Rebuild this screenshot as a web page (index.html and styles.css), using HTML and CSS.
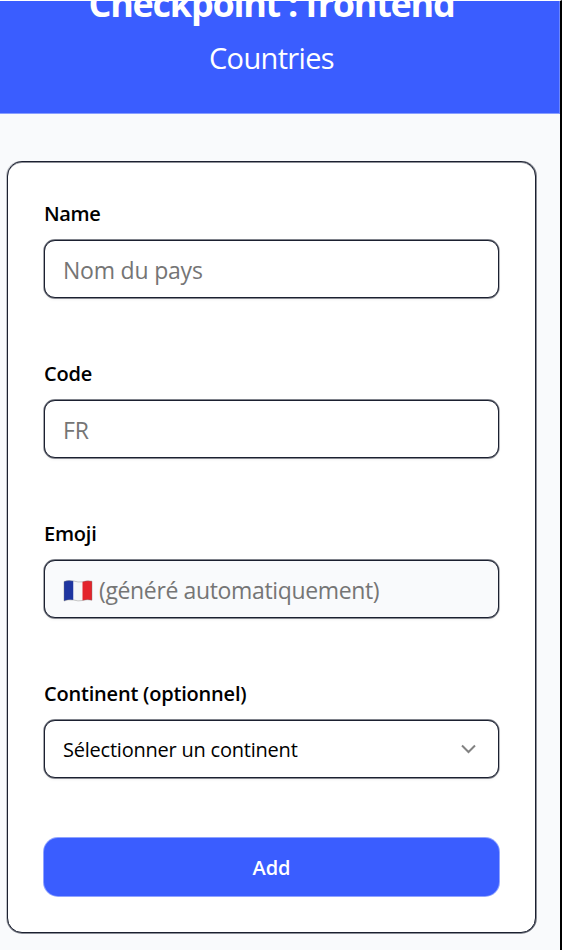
FILE: index.html
```html
<!DOCTYPE html>
<html lang="fr">
<head>
<meta charset="utf-8">
<title>Countries</title>
<link rel="stylesheet" href="styles.css">
</head>
<body>
<div class="page">
  <header class="header">
    <h1 class="title"><span>Checkpoint : frontend</span></h1>
    <p class="subtitle"><span>Countries</span></p>
  </header>
  <main class="main">
    <form class="card">
      <div class="field">
        <label class="label name">Name</label>
        <div class="control"><span class="hint">Nom du pays</span></div>
      </div>
      <div class="field">
        <label class="label">Code</label>
        <div class="control"><span class="hint">FR</span></div>
      </div>
      <div class="field">
        <label class="label">Emoji</label>
        <div class="control readonly">
          <svg class="flag" width="30" height="24" viewBox="0 0 30 24">
            <path fill="#1f35a0" d="M1 2.500Q5 .8 10.500 2V21Q5 20.200 1 22z"/>
            <path fill="#f7f7f7" d="M10.500 2Q15 3.500 19.500 2.800V21.500Q15 22.500 10.500 21z"/>
            <path fill="#e3242b" d="M19.500 2.800Q24 1.200 29 2.200V21.200Q24 20 19.500 21.500z"/>
            <path fill="none" stroke="#777" stroke-opacity=".5" stroke-width=".8" d="M1 2.500Q5 .8 10.500 2Q15 3.500 19.500 2.800Q24 1.200 29 2.200V21.200Q24 20 19.500 21.500Q15 22.500 10.500 21Q5 20.200 1 22z"/>
          </svg>
          <span class="hint auto">(généré automatiquement)</span>
        </div>
      </div>
      <div class="field">
        <label class="label">Continent (optionnel)</label>
        <div class="control select">
          <span class="choice">Sélectionner un continent</span>
          <svg class="chevron" width="16" height="10" viewBox="0 0 16 10"><path d="M2 1.500 8.500 8 15 1.500"/></svg>
        </div>
      </div>
      <button class="submit" type="button"><span>Add</span></button>
    </form>
  </main>
</div>
</body>
</html>
```
FILE: styles.css
```css
* { box-sizing: border-box; }
body {
  margin: 0;
  height: 950px;
  overflow: hidden;
  background: #f9fafb;
  font-family: "Open Sans", "Noto Sans", sans-serif;
  color: #000;
}
.page {
  height: 950px;
  border-top: 1px solid #fff;
  border-right: 2px solid #000;
  background: #f9fafc;
}
.header {
  height: 113px;
  overflow: hidden;
  background: #3a5dff;
  border-right: 1px solid #6c86ff;
  border-bottom: 1px solid #889eff;
  color: #fff;
  text-align: center;
  padding-right: 16px;
}
.title {
  margin: -24px 0 0;
  font-size: 36px;
  line-height: 54px;
  font-weight: 700;
  letter-spacing: -1.27px;
  white-space: nowrap;
}
.subtitle {
  margin: 6px 0 0;
  font-size: 29px;
  line-height: 42px;
  letter-spacing: -0.65px;
}
.main { padding: 47px 24px 0 7px; }
.card {
  display: flex;
  flex-direction: column;
  width: 529px;
  height: 772px;
  padding: 36px 36px 0;
  background: #fff;
  border: 1px solid #1b2030;
  border-radius: 15px;
  box-shadow: -1px 0 #1b203040, 1px 0 #1b203080, 0 1px #1b203080, inset 0 1px #1b203080;
}
.field { height: 160px; }
.label {
  display: block;
  height: 30px;
  margin-bottom: 12px;
  padding-top: 1px;
  font-size: 20px;
  line-height: 30px;
  font-weight: 600;
  letter-spacing: -0.2px;
  white-space: nowrap;
}
.name { letter-spacing: -0.4px; }
.control {
  display: flex;
  align-items: center;
  height: 58px;
  padding: 1px 18px 0;
  border: 1px solid #1b2030;
  border-radius: 11px;
  background: #fff;
  box-shadow: 0 -1px #1b203090, -1px 0 #1b203060, 1px 0 #1b203050, 0 1px #1b203080, 0 2px 3px #0000000d;
  white-space: nowrap;
}
.readonly { background: #f9fafc; }
.hint { color: #757575; font-size: 23px; letter-spacing: -0.2px; }
.auto { letter-spacing: -0.36px; }
.flag { flex: none; margin: 2px 6px 0 0; }
.select { justify-content: space-between; padding: 1px 22px 0 18px; }
.choice { font-size: 20px; letter-spacing: -0.22px; }
.chevron { fill: none; stroke: #828282; stroke-width: 2; margin-top: -2px; }
.submit {
  height: 58px;
  margin: 0;
  padding: 1px 0 0;
  border: 0;
  border-radius: 14px;
  background: #3a5dff;
  box-shadow: 0 0 0 1px #3a5dff90;
  color: #fff;
  font: 600 20px/57px "Open Sans", "Noto Sans", sans-serif;
}
```
